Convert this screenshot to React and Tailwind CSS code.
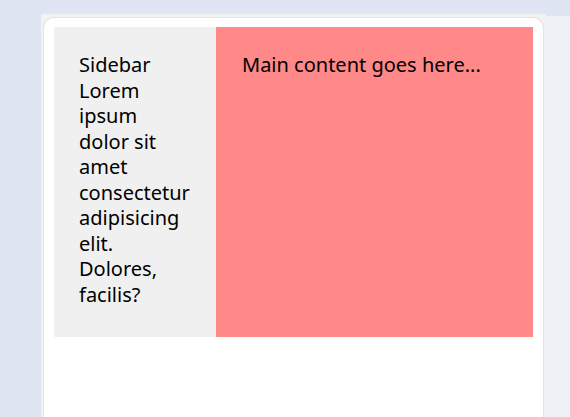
export default function App() {
  return (
    <div className="h-screen w-full overflow-hidden bg-[#dfe5f2] pt-[14px] pl-[41px] flex" style={{ fontFamily: '"Noto Sans", "Open Sans", sans-serif' }}>
      <div className="w-[505px] h-full bg-[#f2f2f3] pt-[3px] px-[2px]">
        <div className="h-full bg-white rounded-t-[11px] border border-[#e3e3e3] border-b-0 pt-[9px] px-[10px]">
          <div className="flex h-[310px]">
            <div className="w-[162px] shrink-0 bg-[#f0f0f0] pl-[25px] pr-[25px] pt-[25px] text-[20px] leading-[25.5px] text-black">
              Sidebar Lorem ipsum dolor sit amet consectetur adipisicing elit. Dolores, facilis?
            </div>
            <div className="flex-1 bg-[#ff8888] pl-[26px] pt-[25px] text-[20px] leading-[25.5px] text-black">
              Main content goes here...
            </div>
          </div>
        </div>
      </div>
      <div className="flex-1 mt-[2px] bg-[#eef2f8]"></div>
    </div>
  );
}
